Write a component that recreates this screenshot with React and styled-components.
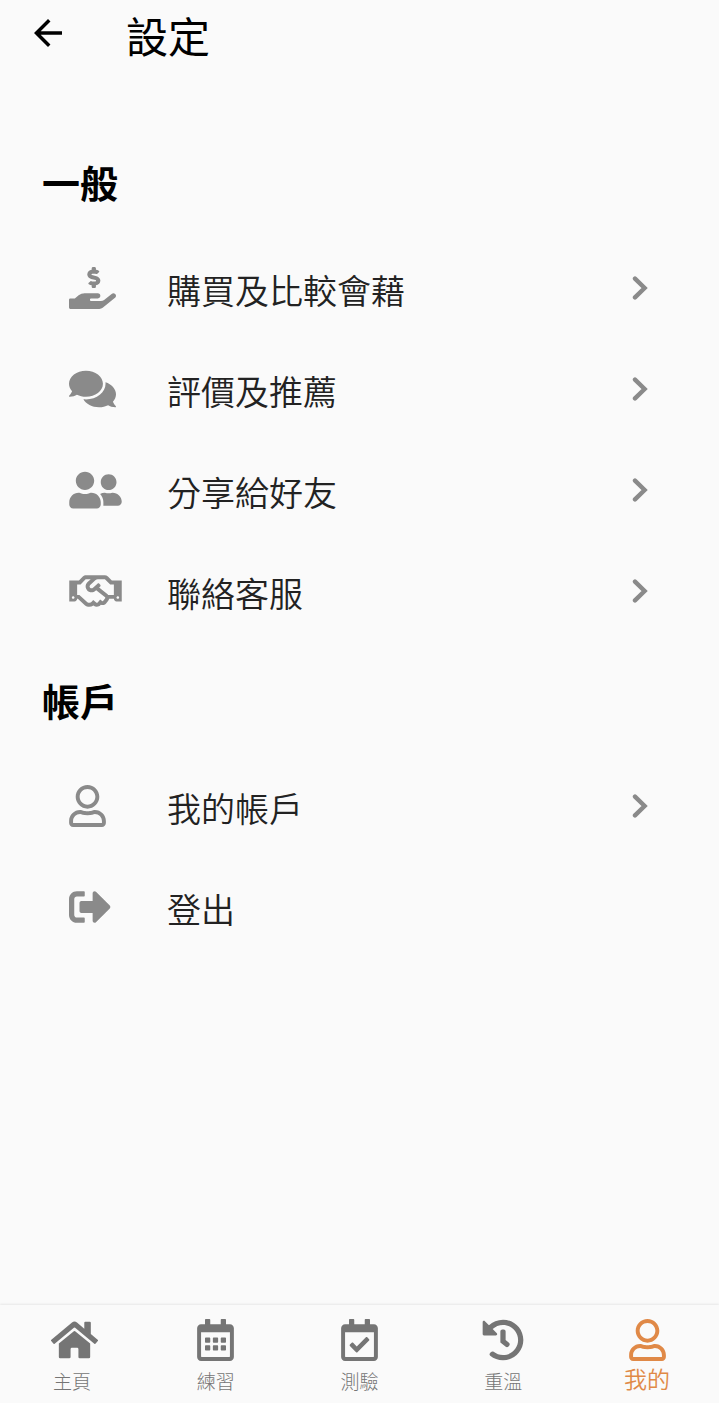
import React from "react"
import styled, { createGlobalStyle } from "styled-components"
import {
  FaHandHoldingUsd,
  FaComments,
  FaUserFriends,
  FaRegHandshake,
  FaRegUser,
  FaSignOutAlt,
  FaHome,
  FaRegCalendarAlt,
  FaRegCalendarCheck,
  FaHistory,
} from "react-icons/fa"
import { MdArrowBack } from "react-icons/md"


const GlobalStyle = createGlobalStyle`
* {
  box-sizing: border-box;
}
body {
  margin: 0;
  background: #fafafa;
  font-family: "Noto Sans CJK TC", sans-serif;
}
button {
  border: 0;
  padding: 0;
  background: none;
  font: inherit;
  color: inherit;
  cursor: pointer;
}
`

const Page = styled.div`
display: flex;
flex-direction: column;
min-height: 100vh;
`

const Header = styled.header`
display: flex;
align-items: center;
gap: 57px;
height: 66px;
padding: 0 27px;
`

const BackButton = styled.button`
display: flex;
font-size: 42px;
color: #000;
`

const Title = styled.h1`
margin: 0;
padding-top: 4px;
font-size: 42px;
line-height: 62px;
font-weight: 400;
color: #000;
`

const Content = styled.main`
flex: 1;
padding-top: 57px;
`

const SectionTitle = styled.h2`
margin: 0;
padding: 31px 42px 27px;
font-size: 38px;
line-height: 56px;
font-weight: 700;
color: #000;
`

const List = styled.ul`
margin: 0;
padding: 0;
list-style: none;
`

const Row = styled.button`
display: flex;
align-items: center;
width: 100%;
height: 101px;
padding: 0 71px 0 69px;
text-align: left;
`

const RowIcon = styled.span`
display: flex;
width: 98px;
color: #8a8a8a;

svg {
  width: ${(props) => props.$width}px;
  height: 42px;
}
`

const RowLabel = styled.span`
flex: 1;
padding-top: 4px;
font-size: 34px;
line-height: 48px;
font-weight: 350;
color: #222;
`

const Nav = styled.nav`
position: sticky;
bottom: 0;
display: flex;
height: 98px;
background: #fafafa;
box-shadow: 0 -1px 2px rgba(0, 0, 0, 0.08);
`

const NavItem = styled.a`
flex: 1;
display: flex;
flex-direction: column;
align-items: center;
padding-top: 14px;
text-decoration: none;
color: ${(props) => (props.$active ? "#e08947" : "#757575")};
font-size: ${(props) => (props.$active ? "23px" : "19px")};
line-height: ${(props) => (props.$active ? "34px" : "40px")};
font-weight: ${(props) => (props.$active ? 350 : 300)};
`

/* icons wider than the box run over its right side */
const NavIcon = styled.span`
display: flex;
justify-content: safe center;
width: 42px;

svg {
  flex: none;
  width: ${(props) => props.$width}px;
  height: 42px;
}
`

const sections = [
  {
    title: "一般",
    items: [
      { label: "購買及比較會藉", icon: FaHandHoldingUsd, iconWidth: 47, arrow: true },
      { label: "評價及推薦", icon: FaComments, iconWidth: 47, arrow: true },
      { label: "分享給好友", icon: FaUserFriends, iconWidth: 53, arrow: true },
      { label: "聯絡客服", icon: FaRegHandshake, iconWidth: 53, arrow: true },
    ],
  },
  {
    title: "帳戶",
    items: [
      { label: "我的帳戶", icon: FaRegUser, iconWidth: 37, arrow: true },
      { label: "登出", icon: FaSignOutAlt, iconWidth: 42, arrow: false },
    ],
  },
]

const tabs = [
  { label: "主頁", icon: FaHome, iconWidth: 47 },
  { label: "練習", icon: FaRegCalendarAlt, iconWidth: 37 },
  { label: "測驗", icon: FaRegCalendarCheck, iconWidth: 37 },
  { label: "重溫", icon: FaHistory, iconWidth: 42 },
  { label: "我的", icon: FaRegUser, iconWidth: 37, active: true },
]


function Chevron() {
  return (
    <svg width="16" height="24" viewBox="0 0 16 24" fill="none" aria-hidden="true">
      <path d="M3 2.6 12.6 12 3 21.4" stroke="#8a8a8a" strokeWidth="4.4" strokeLinecap="round" />
    </svg>
  )
}

function SettingsRow({ label, icon: Icon, iconWidth, arrow }) {
  return (
    <li>
      <Row type="button">
        <RowIcon $width={iconWidth}><Icon /></RowIcon>
        <RowLabel>{label}</RowLabel>
        {arrow && <Chevron />}
      </Row>
    </li>
  )
}

function App() {
  return (
    <Page lang="zh-Hant">
      <GlobalStyle />
      <Header>
        <BackButton type="button" aria-label="返回"><MdArrowBack /></BackButton>
        <Title>設定</Title>
      </Header>
      <Content>
        {sections.map((section) => (
          <section key={section.title}>
            <SectionTitle>{section.title}</SectionTitle>
            <List>
              {section.items.map((item) => (
                <SettingsRow key={item.label} {...item} />
              ))}
            </List>
          </section>
        ))}
      </Content>
      <Nav>
        {tabs.map(({ label, icon: Icon, iconWidth, active }) => (
          <NavItem key={label} href="#" $active={active} aria-current={active ? "page" : undefined}>
            <NavIcon $width={iconWidth}><Icon /></NavIcon>
            {label}
          </NavItem>
        ))}
      </Nav>
    </Page>
  )
}

export default App
